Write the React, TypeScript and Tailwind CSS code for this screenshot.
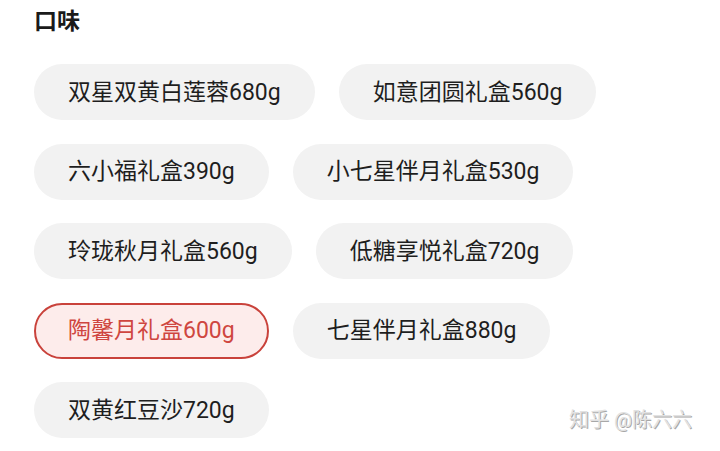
import React from "react";

const rows: { label: string; selected?: boolean }[][] = [
  [{ label: "双星双黄白莲蓉680g" }, { label: "如意团圆礼盒560g" }],
  [{ label: "六小福礼盒390g" }, { label: "小七星伴月礼盒530g" }],
  [{ label: "玲珑秋月礼盒560g" }, { label: "低糖享悦礼盒720g" }],
  [{ label: "陶馨月礼盒600g", selected: true }, { label: "七星伴月礼盒880g" }],
  [{ label: "双黄红豆沙720g" }],
];

function Chip({ label, selected }: { label: string; selected?: boolean }) {
  if (selected) {
    return (
      <div className="box-border h-[56px] flex items-center rounded-full border-2 border-[#c9423b] bg-[#fdeceb] px-[32px] text-[23px] leading-none text-[#cf4640] whitespace-nowrap">
        {label}
      </div>
    );
  }
  return (
    <div className="box-border h-[56px] flex items-center rounded-full bg-[#f2f2f2] px-[34px] text-[23px] leading-none text-[#1e1e1e] whitespace-nowrap">
      {label}
    </div>
  );
}

export default function App() {
  return (
    <div
      className="relative w-[720px] h-[451px] bg-white overflow-hidden"
      style={{ fontFamily: 'Roboto, "Noto Sans CJK SC", "Noto Sans", sans-serif' }}
    >
      <div className="pl-[34px] pt-[5px]">
        <div className="h-[32px] flex items-center text-[23px] font-bold text-[#1a1a1a] leading-none">
          口味
        </div>
        <div className="mt-[27px] flex flex-col gap-y-[23.5px]">
          {rows.map((row, i) => (
            <div key={i} className="flex gap-x-[24px]">
              {row.map((c) => (
                <Chip key={c.label} label={c.label} selected={c.selected} />
              ))}
            </div>
          ))}
        </div>
      </div>
      <div className="absolute left-[569px] top-[410px] text-[20px] leading-none text-[#e2e2e2] whitespace-nowrap [text-shadow:1px_1px_0_#a8a8a8]">
        知乎 @陈六六
      </div>
    </div>
  );
}
